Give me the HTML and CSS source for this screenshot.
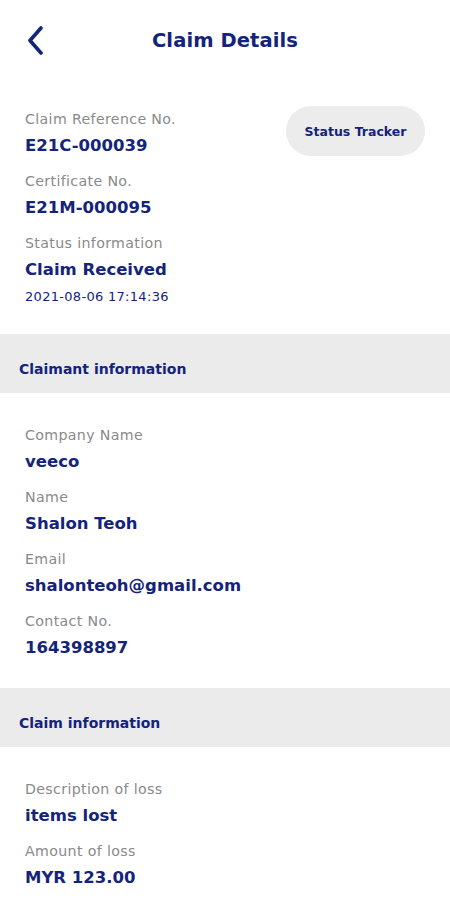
FILE: index.html
```html
<!DOCTYPE html>
<html>
<head>
<meta charset="utf-8">
<link rel="stylesheet" href="styles.css">
</head>
<body>
<div class="screen">
  <header class="header">
    <span class="back">
      <svg width="20" height="30" viewBox="0 0 20 30"><path d="M14 3 L3 15.5 L14 28" fill="none" stroke="#14237b" stroke-width="3.6" stroke-linecap="round" stroke-linejoin="round"/></svg>
    </span>
    <h1 class="title">Claim Details</h1>
  </header>

  <section class="top">
    <div class="list">
      <div class="item"><div class="label">Claim Reference No.</div><div class="value">E21C-000039</div></div>
      <div class="item"><div class="label">Certificate No.</div><div class="value">E21M-000095</div></div>
      <div class="item"><div class="label">Status information</div><div class="value">Claim Received</div><div class="date">2021-08-06 17:14:36</div></div>
    </div>
    <button class="tracker">Status Tracker</button>
  </section>

  <div class="band">Claimant information</div>
  <section class="list block">
    <div class="item"><div class="label">Company Name</div><div class="value">veeco</div></div>
    <div class="item"><div class="label">Name</div><div class="value">Shalon Teoh</div></div>
    <div class="item"><div class="label">Email</div><div class="value">shalonteoh@gmail.com</div></div>
    <div class="item"><div class="label">Contact No.</div><div class="value">164398897</div></div>
  </section>

  <div class="band">Claim information</div>
  <section class="list block">
    <div class="item"><div class="label">Description of loss</div><div class="value">items lost</div></div>
    <div class="item"><div class="label">Amount of loss</div><div class="value">MYR 123.00</div></div>
  </section>
</div>
</body>
</html>
```
FILE: styles.css
```css
* { box-sizing: border-box; }
html, body { margin: 0; padding: 0; background: #fff; }
body { font-family: "DejaVu Sans", "Open Sans", sans-serif; color: #14237b; }
.screen { width: 450px; height: 900px; overflow: hidden; }
.header { height: 80px; position: relative; display: flex; align-items: center; justify-content: center; }
.back { position: absolute; left: 27px; top: 25px; width: 20px; height: 30px; }
.back svg { display: block; }
.title { margin: 0; font-size: 19.5px; font-weight: bold; letter-spacing: 0.1px; }
.top { display: flex; justify-content: space-between; align-items: flex-start; padding: 29px 25px 27px 25px; }
.list { display: flex; flex-direction: column; gap: 13px; }
.block { padding: 32px 25px 28px 25px; }
.label { font-size: 14.2px; line-height: 20px; color: #8a8a8a; letter-spacing: 0.35px; }
.value { margin-top: 5px; font-size: 16.5px; line-height: 24px; font-weight: bold; color: #14237b; }
.date { margin-top: 5px; font-size: 13px; line-height: 20px; color: #14237b; letter-spacing: 0.3px; }
.tracker { width: 139px; height: 50px; margin-top: -3px; border: none; border-radius: 25px; background: #ececec; color: #14237b; font-family: inherit; font-size: 12.5px; font-weight: bold; padding: 0; }
.band { background: #ebebeb; padding: 25px 19px 14px 19px; font-size: 14px; line-height: 20px; font-weight: bold; color: #14237b; }
```
